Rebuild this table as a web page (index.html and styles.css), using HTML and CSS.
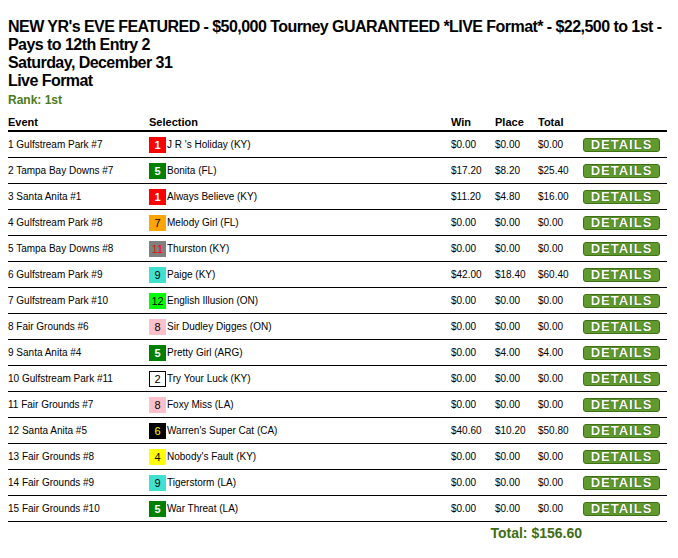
FILE: index.html
```html
<!DOCTYPE html>
<html>
<head>
<meta charset="utf-8">
<link rel="stylesheet" href="styles.css">
</head>
<body>
<h1 class="title">NEW YR's EVE FEATURED - $50,000 Tourney GUARANTEED *LIVE Format* - $22,500 to 1st - Pays to 12th Entry 2<br>Saturday, December 31<br>Live Format</h1>
<div class="rank">Rank: 1st</div>
<table class="results">
<colgroup>
<col class="c-event"><col class="c-sel"><col class="c-win"><col class="c-place"><col class="c-total"><col class="c-btn">
</colgroup>
<thead>
<tr><th>Event</th><th>Selection</th><th>Win</th><th>Place</th><th>Total</th><th></th></tr>
</thead>
<tbody>
<tr><td>1 Gulfstream Park #7</td><td><div class="sel"><span class="pp red">1</span>J R 's Holiday (KY)</div></td><td>$0.00</td><td>$0.00</td><td>$0.00</td><td><span class="btn">DETAILS</span></td></tr>
<tr><td>2 Tampa Bay Downs #7</td><td><div class="sel"><span class="pp green">5</span>Bonita (FL)</div></td><td>$17.20</td><td>$8.20</td><td>$25.40</td><td><span class="btn">DETAILS</span></td></tr>
<tr><td>3 Santa Anita #1</td><td><div class="sel"><span class="pp red">1</span>Always Believe (KY)</div></td><td>$11.20</td><td>$4.80</td><td>$16.00</td><td><span class="btn">DETAILS</span></td></tr>
<tr><td>4 Gulfstream Park #8</td><td><div class="sel"><span class="pp orange">7</span>Melody Girl (FL)</div></td><td>$0.00</td><td>$0.00</td><td>$0.00</td><td><span class="btn">DETAILS</span></td></tr>
<tr><td>5 Tampa Bay Downs #8</td><td><div class="sel"><span class="pp gray">11</span>Thurston (KY)</div></td><td>$0.00</td><td>$0.00</td><td>$0.00</td><td><span class="btn">DETAILS</span></td></tr>
<tr><td>6 Gulfstream Park #9</td><td><div class="sel"><span class="pp turq">9</span>Paige (KY)</div></td><td>$42.00</td><td>$18.40</td><td>$60.40</td><td><span class="btn">DETAILS</span></td></tr>
<tr><td>7 Gulfstream Park #10</td><td><div class="sel"><span class="pp lime">12</span>English Illusion (ON)</div></td><td>$0.00</td><td>$0.00</td><td>$0.00</td><td><span class="btn">DETAILS</span></td></tr>
<tr><td>8 Fair Grounds #6</td><td><div class="sel"><span class="pp pink">8</span>Sir Dudley Digges (ON)</div></td><td>$0.00</td><td>$0.00</td><td>$0.00</td><td><span class="btn">DETAILS</span></td></tr>
<tr><td>9 Santa Anita #4</td><td><div class="sel"><span class="pp green">5</span>Pretty Girl (ARG)</div></td><td>$0.00</td><td>$4.00</td><td>$4.00</td><td><span class="btn">DETAILS</span></td></tr>
<tr><td>10 Gulfstream Park #11</td><td><div class="sel"><span class="pp white">2</span>Try Your Luck (KY)</div></td><td>$0.00</td><td>$0.00</td><td>$0.00</td><td><span class="btn">DETAILS</span></td></tr>
<tr><td>11 Fair Grounds #7</td><td><div class="sel"><span class="pp pink">8</span>Foxy Miss (LA)</div></td><td>$0.00</td><td>$0.00</td><td>$0.00</td><td><span class="btn">DETAILS</span></td></tr>
<tr><td>12 Santa Anita #5</td><td><div class="sel"><span class="pp black">6</span>Warren's Super Cat (CA)</div></td><td>$40.60</td><td>$10.20</td><td>$50.80</td><td><span class="btn">DETAILS</span></td></tr>
<tr><td>13 Fair Grounds #8</td><td><div class="sel"><span class="pp yellow">4</span>Nobody's Fault (KY)</div></td><td>$0.00</td><td>$0.00</td><td>$0.00</td><td><span class="btn">DETAILS</span></td></tr>
<tr><td>14 Fair Grounds #9</td><td><div class="sel"><span class="pp turq">9</span>Tigerstorm (LA)</div></td><td>$0.00</td><td>$0.00</td><td>$0.00</td><td><span class="btn">DETAILS</span></td></tr>
<tr><td>15 Fair Grounds #10</td><td><div class="sel"><span class="pp green">5</span>War Threat (LA)</div></td><td>$0.00</td><td>$0.00</td><td>$0.00</td><td><span class="btn">DETAILS</span></td></tr>
</tbody>
<tfoot>
<tr><td colspan="5" class="grand">Total: $156.60</td><td></td></tr>
</tfoot>
</table>
</body>
</html>
```
FILE: styles.css
```css
body {
  margin: 8px;
  font-family: "Liberation Sans", Arial, sans-serif;
  color: #000;
  background: #fff;
}
.title {
  font-size: 16px;
  line-height: 18px;
  font-weight: bold;
  letter-spacing: -0.55px;
  margin: 10px 0 0 0;
}
.rank {
  margin-top: 3px;
  font-size: 12px;
  line-height: 14px;
  font-weight: bold;
  color: #4b7a1c;
}
.results {
  margin-top: 6px;
  margin-left: -1px;
  border-collapse: collapse;
  width: 660px;
  table-layout: fixed;
  font-size: 10px;
}
.c-event { width: 141px; }
.c-sel { width: 302px; }
.c-win { width: 44px; }
.c-place { width: 43px; }
.c-total { width: 45px; }
.c-btn { width: 85px; }
.results th {
  text-align: left;
  font-weight: bold;
  font-size: 11px;
  height: 17px;
  padding: 0 0 0 1px;
  border-bottom: 2px solid #000;
  vertical-align: middle;
}
.results td {
  height: 25px;
  padding: 0 0 0 1px;
  border-bottom: 1px solid #000;
  vertical-align: middle;
  white-space: nowrap;
}
.sel {
  display: flex;
  align-items: center;
  gap: 1px;
}
.pp {
  display: inline-flex;
  align-items: center;
  justify-content: center;
  width: 17px;
  height: 16px;
  box-sizing: border-box;
  font-size: 11px;
}
.red { background: #ff0000; color: #fff; font-weight: bold; }
.green { background: #008000; color: #fff; font-weight: bold; }
.orange { background: #ffa500; color: #000; }
.gray { background: #808080; color: #ff0000; }
.turq { background: #40e0d0; color: #000; }
.lime { background: #00ff00; color: #000; }
.pink { background: #ffc0cb; color: #000; }
.white { background: #fff; color: #000; border: 1px solid #000; }
.black { background: #000; color: #ffff00; }
.yellow { background: #ffff00; color: #000; }
.btn {
  display: flex;
  align-items: center;
  justify-content: center;
  width: 77px;
  height: 14px;
  box-sizing: border-box;
  background: #5e9a2e;
  border: 1px solid #3f6f17;
  border-radius: 3px;
  color: #fff;
  font-weight: bold;
  font-size: 13px;
  letter-spacing: 1px;
  text-shadow: 0 0 1px #2c560c, 0 0 1px #2c560c;
}
.results tfoot td {
  border-bottom: none;
  height: 22px;
}
.grand {
  text-align: right;
  font-size: 14px;
  font-weight: bold;
  color: #3f6d14;
}
```
